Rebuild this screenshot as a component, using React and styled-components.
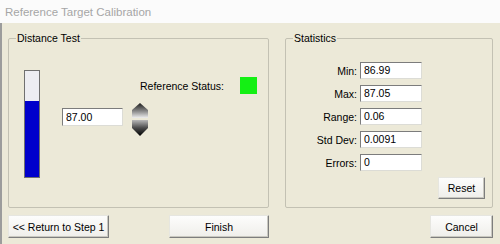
import * as React from "react"
import styled, { createGlobalStyle } from "styled-components"

const GlobalStyle = createGlobalStyle`
    html, body {
        margin: 0;
        padding: 0;
        background: #ece9d8;
    }
    body {
        font-family: "Liberation Sans", Arial, sans-serif;
        font-size: 10.5px;
        color: #000000;
    }
`

const Window = styled.div`
    width: 500px;
    height: 244px;
    display: flex;
    flex-direction: column;
    overflow: hidden;
`
const TitleBar = styled.div`
    height: 23px;
    flex: none;
    background: #fbfbfb;
    color: #a6a6a6;
    font-size: 11.5px;
    display: flex;
    align-items: center;
    padding-left: 5px;
    padding-top: 1px;
    box-sizing: border-box;
`
const Body = styled.div`
    flex: 1;
    border-left: 2px solid #9c9c9c;
    padding: 15px 6px 0 6px;
    display: flex;
    flex-direction: column;
`
const Panels = styled.div`
    display: flex;
    gap: 16px;
    height: 170px;
`
const Group = styled.div`
    position: relative;
    box-sizing: border-box;
    width: ${(p) => p.$width}px;
    border: 1px solid #c3c1b3;
    border-radius: 2px;
    display: flex;
    flex-direction: ${(p) => (p.$column ? "column" : "row")};
    align-items: flex-start;
    padding: ${(p) => p.$pad};
`
const GroupTitle = styled.span`
    position: absolute;
    top: -7px;
    left: 7px;
    padding: 0 1px;
    background: #ece9d8;
    line-height: 13px;
`
const Bar = styled.div`
    width: 16px;
    height: 108px;
    box-sizing: border-box;
    border: 1px solid #707070;
    background: #ededf2;
    display: flex;
    flex-direction: column;
    justify-content: flex-end;
    flex: none;
`
const BarFill = styled.div`
    background: #0000cc;
`
const DistanceMain = styled.div`
    flex: 1;
    display: flex;
    flex-direction: column;
    padding-top: 7px;
    padding-right: 11px;
`
const StatusRow = styled.div`
    display: flex;
    justify-content: flex-end;
    align-items: center;
    gap: 16px;
    height: 17px;
`
const StatusLamp = styled.div`
    width: 17px;
    height: 17px;
    background: ${(p) => (p.$ok ? "#14f014" : "#e01010")};
`
const ValueRow = styled.div`
    display: flex;
    align-items: flex-start;
    gap: 9px;
    margin-top: 9px;
    margin-left: 22px;
`
const Field = styled.div`
    box-sizing: border-box;
    width: ${(p) => p.$width}px;
    height: ${(p) => p.$height}px;
    margin-top: ${(p) => p.$top || 0}px;
    background: #ffffff;
    border: 1px solid;
    border-color: #7c7c7c #dcdcd6 #dcdcd6 #7c7c7c;
    padding: 0 3px;
    display: flex;
    align-items: center;
    line-height: 1;
`
const StatsGrid = styled.div`
    display: grid;
    grid-template-columns: 71px 62px;
    column-gap: 3px;
    row-gap: 6px;
    align-items: center;
`
const StatLabel = styled.span`
    text-align: right;
`
const Button = styled.button`
    box-sizing: border-box;
    width: ${(p) => p.$width}px;
    height: ${(p) => p.$height || 23}px;
    margin-left: ${(p) => p.$left || 0}px;
    font-family: inherit;
    font-size: 10.5px;
    color: #000000;
    background: linear-gradient(#fdfdfc, #efeeea);
    border: 1px solid;
    border-color: #e6e6e0 #7d7d7d #7d7d7d #e6e6e0;
    box-shadow: inset -1px -1px 0 #c9c8c0;
    border-radius: 1px;
    padding: 0;
`
const ResetWrap = styled.div`
    align-self: flex-end;
    margin-top: 6px;
    margin-right: 7px;
`
const Footer = styled.div`
    display: flex;
    margin-top: 7px;
`

const Spinner = () => (
    <svg width="16" height="33" viewBox="0 0 16 33">
        <defs>
            <linearGradient id="up" x1="0" y1="0" x2="0" y2="1">
                <stop offset="0" stopColor="#1c1c1c" />
                <stop offset="0.55" stopColor="#8a8a8a" />
                <stop offset="1" stopColor="#eeeeee" />
            </linearGradient>
            <linearGradient id="down" x1="0" y1="0" x2="0" y2="1">
                <stop offset="0" stopColor="#b8b8b8" />
                <stop offset="0.5" stopColor="#4a4a4a" />
                <stop offset="1" stopColor="#000000" />
            </linearGradient>
        </defs>
        <polygon points="8,0 16,7 16,15 0,15 0,7" fill="url(#up)" />
        <polygon points="0,17 16,17 16,25 8,33 0,25" fill="url(#down)" />
    </svg>
)

const stats = [
    ["Min:", "86.99"],
    ["Max:", "87.05"],
    ["Range:", "0.06"],
    ["Std Dev:", "0.0091"],
    ["Errors:", "0"],
]

const App = () => {
    const level = 72
    return (
        <Window>
            <GlobalStyle />
            <TitleBar>Reference Target Calibration</TitleBar>
            <Body>
                <Panels>
                    <Group $width={261} $pad="31px 0 0 15px">
                        <GroupTitle>Distance Test</GroupTitle>
                        <Bar>
                            <BarFill style={{ height: `${level}%` }} />
                        </Bar>
                        <DistanceMain>
                            <StatusRow>
                                <span>Reference Status:</span>
                                <StatusLamp $ok />
                            </StatusRow>
                            <ValueRow>
                                <Field $width={61} $height={18} $top={5}>87.00</Field>
                                <Spinner />
                            </ValueRow>
                        </DistanceMain>
                    </Group>
                    <Group $width={208} $column $pad="23px 0 0 0">
                        <GroupTitle>Statistics</GroupTitle>
                        <StatsGrid>
                            {stats.map(([label, value]) => (
                                <React.Fragment key={label}>
                                    <StatLabel>{label}</StatLabel>
                                    <Field $width={62} $height={17}>{value}</Field>
                                </React.Fragment>
                            ))}
                        </StatsGrid>
                        <ResetWrap>
                            <Button $width={47} $height={22}>Reset</Button>
                        </ResetWrap>
                    </Group>
                </Panels>
                <Footer>
                    <Button $width={101}>&lt;&lt; Return to Step 1</Button>
                    <Button $width={100} $left={60}>Finish</Button>
                    <Button $width={63} $left={161}>Cancel</Button>
                </Footer>
            </Body>
        </Window>
    )
}

export default App
